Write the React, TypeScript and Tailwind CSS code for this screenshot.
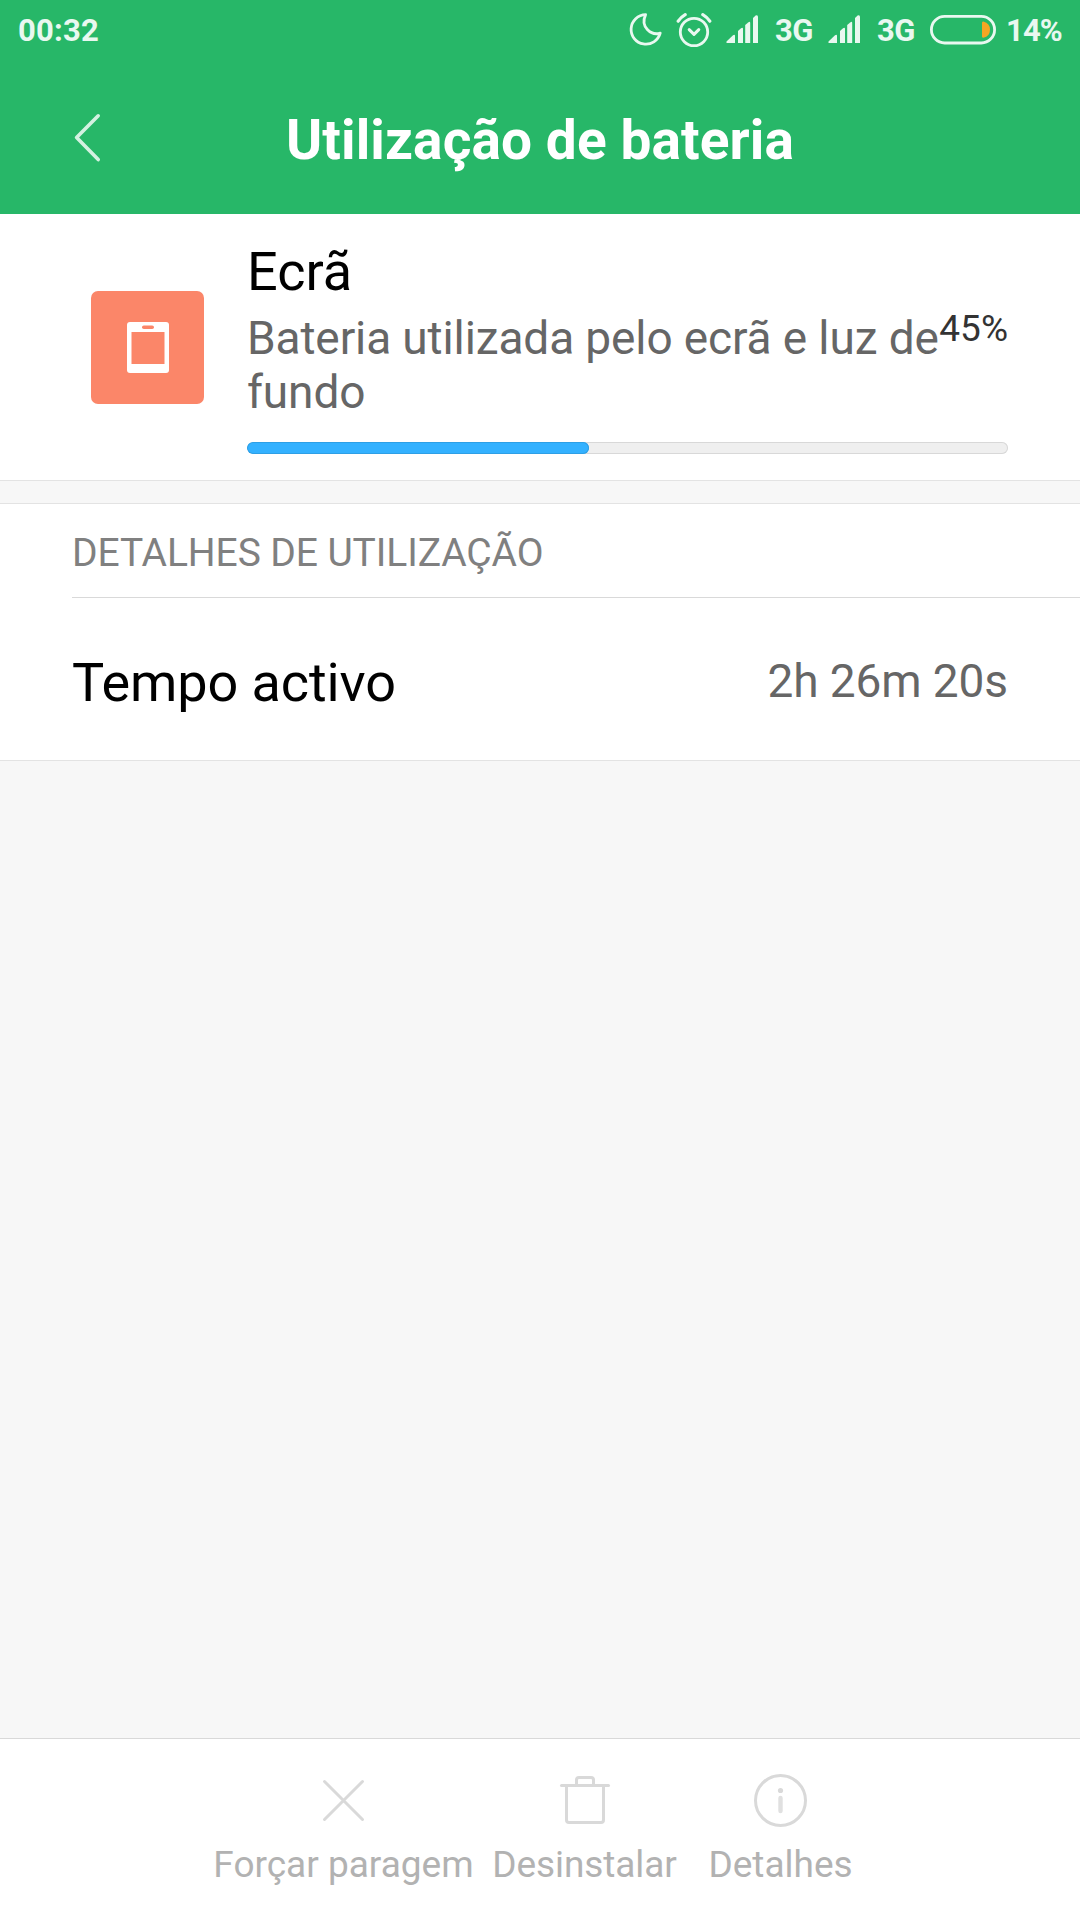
import React from 'react';

const SignalIcon = () => (
  <svg width="32" height="28" viewBox="0 0 32 28" fill="currentColor">
    <path d="M0.5 28 L0.5 26.6 L7 20.3 Q9 19 9 21 L9 28 Z" />
    <path d="M12 28 V16 L15 13.2 Q17 12 17 14 V28 Z" />
    <path d="M19.2 28 V10 L22.2 7.4 Q24.2 6 24.2 8 V28 Z" />
    <path d="M27 28 V3 L29.6 0.6 Q32 -0.5 32 2 V28 Z" />
  </svg>
);

const MoonIcon = () => (
  <svg width="36" height="36" viewBox="0 0 36 36" fill="none" stroke="currentColor" strokeWidth="2.8" strokeLinecap="round" strokeLinejoin="round">
    <path d="M17.6 2.6 A14.8 14.8 0 1 0 32.2 21.2 C23 23.8 12 15 17.6 2.6 Z" />
  </svg>
);

const AlarmIcon = () => (
  <svg width="36" height="36" viewBox="0 0 36 36" fill="none" stroke="currentColor" strokeWidth="2.8" strokeLinecap="round" strokeLinejoin="round">
    <circle cx="18" cy="20" r="13.7" />
    <path d="M13.2 17.6 L18 22.4 L22.8 17.6" strokeWidth="3" />
    <path d="M2.2 9.2 Q5 5 9.2 2.6 M33.8 9.2 Q31 5 26.8 2.6" strokeWidth="3.2" />
  </svg>
);

const BatteryIcon = () => (
  <svg width="66" height="30" viewBox="0 0 66 30" fill="none">
    <rect x="1.4" y="1.4" width="63.2" height="26.6" rx="13.3" stroke="currentColor" strokeWidth="2.8" />
    <path d="M52 8 Q52 6.6 53.4 6.6 Q60 8.4 60 14.7 Q60 21 53.4 22.8 Q52 22.8 52 21.4 Z" fill="#f5a623" />
  </svg>
);

const StatusBar = () => (
  <div className="flex h-[62px] justify-between pr-[16px] pl-[18px] text-[31px] leading-[62px] font-bold text-[#e9f8f0]">
    <span className="tracking-[0.2px]">00:32</span>
    <div className="flex">
      <div className="mt-[12px] mr-[12px]"><MoonIcon /></div>
      <div className="mt-[12px] mr-[14px]"><AlarmIcon /></div>
      <div className="mt-[15px] mr-[17px]"><SignalIcon /></div>
      <span className="w-[53px] tracking-[-0.5px]">3G</span>
      <div className="mt-[15px] mr-[17px]"><SignalIcon /></div>
      <span className="w-[53px] tracking-[-0.5px]">3G</span>
      <div className="mt-[15px] mr-[10px]"><BatteryIcon /></div>
      <span className="w-[58px] tracking-[-0.9px]">14%</span>
    </div>
  </div>
);

const NavBar = () => (
  <div className="flex h-[152px] items-center">
    <button className="w-[140px] pl-[71px]">
      <svg width="32" height="50" viewBox="0 0 32 50" fill="none" stroke="#d4f1e1" strokeWidth="3.6" strokeLinecap="round" strokeLinejoin="round">
        <path d="M27.2 2.8 L5.6 24.6 L27.2 46.6" />
      </svg>
    </button>
    <h1 className="mr-[140px] flex-1 pt-[4px] text-center text-[55px] leading-[64px] font-bold tracking-[0.1px] text-white">
      Utilização de bateria
    </h1>
  </div>
);

const UsageSummary = ({ percent }: { percent: number }) => (
  <section className="flex h-[267px] border-b border-[#e3e3e3] bg-white pt-[25px] pr-[72px] pl-[91px]">
    <div className="mt-[52px] mr-[43px] flex h-[113px] w-[113px] shrink-0 items-center justify-center rounded-[7px] bg-[#fb8669]">
      <svg width="42" height="51" viewBox="0 0 42 51">
        <rect width="42" height="51" rx="3" fill="#fff" />
        <rect x="15" y="3.5" width="12" height="3.6" rx="1.8" fill="#fb8669" />
        <rect x="4.5" y="10" width="33" height="32" fill="#fb8669" />
      </svg>
    </div>
    <div className="min-w-0 flex-1">
      <h2 className="text-[54px] leading-[65px] text-black">Ecrã</h2>
      <div className="mt-[7px] flex h-[109px] justify-between">
        <p className="w-[690px] shrink-0 text-[46px] leading-[54px] tracking-[-0.12px] whitespace-nowrap text-[#666]">
          Bateria utilizada pelo ecrã e luz de<br />fundo
        </p>
        <span className="text-[37px] leading-[36px] text-[#333]">{percent}%</span>
      </div>
      <div className="mt-[22px] h-[12px] overflow-hidden rounded-full bg-[#efefef] inset-ring inset-ring-[#d8d8d8]">
        <div className="h-full rounded-full bg-[#33b1ff] inset-ring inset-ring-[#2e9fe5]" style={{ width: `${percent}%` }} />
      </div>
    </div>
  </section>
);

const UsageDetails = () => (
  <section className="mt-[22px] border-y border-[#e3e3e3] bg-white pl-[72px]">
    <div className="h-[94px] border-b border-[#d9d9d9] pt-[4px] text-[39px] leading-[90px] tracking-[-0.1px] text-[#808080]">
      DETALHES DE UTILIZAÇÃO
    </div>
    <div className="flex h-[162px] items-center justify-between pr-[72px]">
      <span className="pt-[7px] text-[54px] leading-[64px] tracking-[-0.1px] text-black">Tempo activo</span>
      <span className="pt-[4px] text-[46px] leading-[54px] tracking-[-0.1px] text-[#666]">2h 26m 20s</span>
    </div>
  </section>
);

const ActionBar = () => (
  <footer className="flex h-[182px] border-t border-[#d9d9d9] bg-white pl-[206px] text-[37px] leading-[44px] text-[#b2b2b2]">
    <button className="flex w-[275px] flex-col items-center pt-[34px]">
      <svg width="55" height="55" viewBox="0 0 55 55" fill="none" stroke="#d9d9d9" strokeWidth="3" strokeLinecap="round">
        <path d="M8.5 8.5 L46.5 46.5 M46.5 8.5 L8.5 46.5" />
      </svg>
      <span className="mt-[15px] whitespace-nowrap">Forçar paragem</span>
    </button>
    <button className="flex w-[207px] flex-col items-center pt-[34px]">
      <svg width="55" height="55" viewBox="0 0 55 55" fill="none" stroke="#d9d9d9" strokeWidth="3" strokeLinecap="round" strokeLinejoin="round">
        <path d="M4.5 12.5 H51.5" />
        <path d="M19.5 12 V7 Q19.5 4.5 22 4.5 H34 Q36.5 4.5 36.5 7 V12" />
        <path d="M9.5 13 V47 Q9.5 49.5 12 49.5 H44 Q46.5 49.5 46.5 47 V13" />
      </svg>
      <span className="mt-[15px] tracking-[-0.1px] whitespace-nowrap">Desinstalar</span>
    </button>
    <button className="flex w-[185px] flex-col items-center pt-[34px]">
      <svg width="55" height="55" viewBox="0 0 55 55" fill="none" stroke="#d9d9d9">
        <circle cx="27.5" cy="27.5" r="25" strokeWidth="3" />
        <circle cx="27.5" cy="17.5" r="2.6" fill="#d9d9d9" stroke="none" />
        <path d="M27.5 25 V38" strokeWidth="4.4" strokeLinecap="round" stroke="#e0e0e0" />
      </svg>
      <span className="mt-[15px] whitespace-nowrap">Detalhes</span>
    </button>
  </footer>
);

const App = () => {
  return (
    <div className="flex h-[1920px] w-[1080px] flex-col bg-[#f7f7f7] font-['Roboto',sans-serif]">
      <header className="bg-[#27b768]">
        <StatusBar />
        <NavBar />
      </header>
      <main className="flex-1">
        <UsageSummary percent={45} />
        <UsageDetails />
      </main>
      <ActionBar />
    </div>
  );
};

export default App;
